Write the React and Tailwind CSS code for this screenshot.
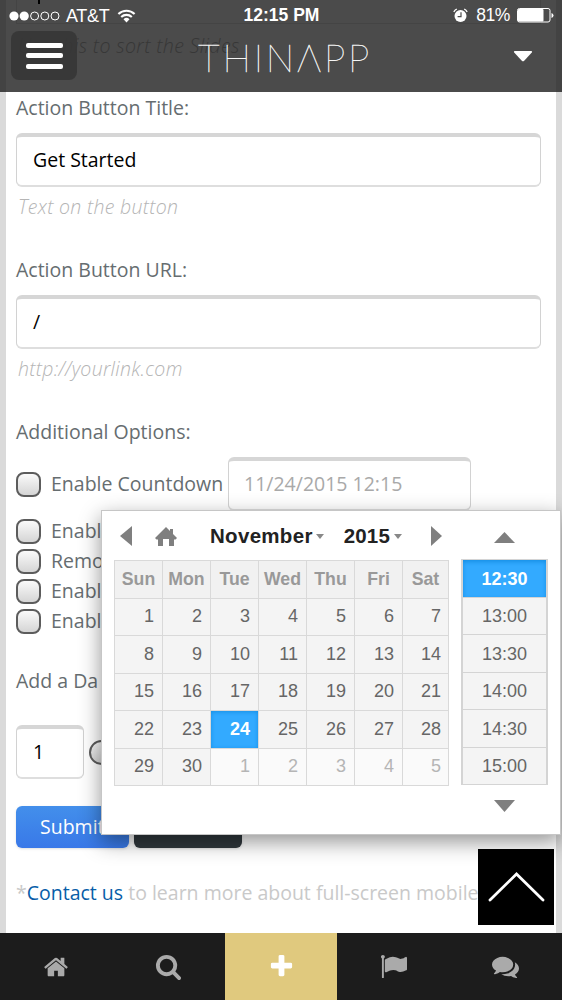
import React from "react";

const HOME =
  "M1472 992v480q0 26-19 45t-45 19h-384v-384h-256v384h-384q-26 0-45-19t-19-45v-480q0-1 .5-3t.5-3l575-474 575 474q1 2 1 6zm223-69l-62 74q-8 9-21 11h-3q-13 0-21-7l-692-577-692 577q-12 8-24 7-13-2-21-11l-62-74q-8-10-7-23.5t11-21.5l719-599q32-26 76-26t76 26l244 204v-195q0-14 9-23t23-9h192q14 0 23 9t9 23v408l219 182q10 8 11 21.5t-7 23.5z";
const SEARCH =
  "M1216 832q0-185-131.5-316.5t-316.5-131.5-316.5 131.5-131.5 316.5 131.5 316.5 316.5 131.5 316.5-131.5 131.5-316.5zm512 832q0 52-38 90t-90 38q-54 0-90-38l-343-342q-179 124-399 124-143 0-273.5-55.5t-225-150-150-225-55.5-273.5 55.5-273.5 150-225 225-150 273.5-55.5 273.5 55.5 225 150 150 225 55.5 273.5q0 220-124 399l343 343q37 37 37 90z";
const PLUS =
  "M1600 736v192q0 40-28 68t-68 28h-416v416q0 40-28 68t-68 28h-192q-40 0-68-28t-28-68v-416h-416q-40 0-68-28t-28-68v-192q0-40 28-68t68-28h416v-416q0-40 28-68t68-28h192q40 0 68 28t28 68v416h416q40 0 68 28t28 68z";
const FLAG =
  "M320 256q0 72-64 110v1266q0 13-9.5 22.5t-22.5 9.5h-64q-13 0-22.5-9.5t-9.5-22.5v-1266q-64-38-64-110 0-53 37.5-90.5t90.5-37.5 90.5 37.5 37.5 90.5zm1472 64v763q0 25-12.5 38.5t-39.5 27.5q-215 116-369 116-61 0-123.5-22t-108.5-48-115.5-48-142.5-22q-192 0-464 146-17 9-33 9-26 0-45-19t-19-45v-742q0-32 31-55 21-14 79-43 236-120 421-120 107 0 200 29t219 88q38 19 88 19 54 0 117.5-21t110-47 88-47 54.5-21q26 0 45 19t19 45z";
const COMMENTS =
  "M1408 768q0 139-94 257t-256.5 186.5-353.5 68.5q-86 0-176-16-124 88-278 128-36 9-86 16h-3q-11 0-20.5-8t-11.5-21q-1-3-1-6.5t.5-6.5 2-6l2.5-5 3.5-5.5 4-5 4.5-5 4-4.500q5-6 23-25t26-29.5 22.5-29 25-38.5 20.5-44q-124-72-195-177t-71-224q0-139 94-257t256.5-186.5 353.5-68.5 353.5 68.5 256.5 186.5 94 257zm384 256q0 120-71 224.5t-195 176.5q10 24 20.5 44t25 38.5 22.5 29 26 29.5 23 25q1 1 4 4.5t4.5 5 4 5 3.5 5.5l2.5 5 2 6 .5 6.5-1 6.500q-3 14-13 22t-22 7q-50-7-86-16-154-40-278-128-90 16-176 16-271 0-472-132 58 4 88 4 161 0 309-45t264-129q125-92 192-212t67-254q0-77-23-152 129 71 204 178t75 230z";

function Glyph({ d, className }) {
  return (
    <svg viewBox="0 0 1792 1792" fill="currentColor" className={className}>
      <path d={d} />
    </svg>
  );
}

function StatusBar() {
  return (
    <div className="grid h-[31px] grid-cols-[1fr_auto_1fr] items-center px-[9px] font-['Liberation_Sans',sans-serif] text-[18px] leading-none text-white">
      <div className="flex items-center">
        <svg width="52" height="10" viewBox="0 0 52 10">
          <circle cx="5" cy="5" r="4.6" fill="#fff" />
          <circle cx="15.2" cy="5" r="4.6" fill="#fff" />
          <g fill="none" stroke="#fff" strokeWidth="1">
            <circle cx="25.6" cy="5" r="4" />
            <circle cx="35.8" cy="5" r="4" />
            <circle cx="46" cy="5" r="4" />
          </g>
        </svg>
        <span className="ml-[5px] tracking-[-0.3px]">AT&amp;T</span>
        <svg width="19" height="14" viewBox="0 0 18 14" className="ml-[8px]" fill="none" stroke="#fff" strokeWidth="2.1">
          <path d="M.9 5.1a11.5 11.5 0 0 1 16.2 0M3.7 8a7.6 7.6 0 0 1 10.6 0" />
          <path d="M9 13.4 6 10.3a4.3 4.3 0 0 1 6 0z" fill="#fff" stroke="none" />
        </svg>
      </div>
      <span className="pl-px text-[17.5px] font-bold">12:15 PM</span>
      <div className="-mr-[1px] flex items-center justify-end">
        <svg width="15" height="15" viewBox="0 0 15 15">
          <circle cx="7.5" cy="8" r="6" fill="#fff" />
          <path d="M.8 3.8a8 8 0 0 1 3-2.8M14.2 3.8a8 8 0 0 0-3-2.8" fill="none" stroke="#fff" strokeWidth="1.4" />
          <path d="M8 4.2v4.4H4.6" fill="none" stroke="#4b4b4b" strokeWidth="1.2" />
        </svg>
        <span className="ml-[8px] text-[17.5px] tracking-[-0.4px]">81%</span>
        <svg width="37" height="15" viewBox="0 0 37 15" className="ml-[7px]">
          <rect x=".5" y=".5" width="32.5" height="13.5" rx="2" fill="none" stroke="#fff" />
          <rect x="1" y="1" width="25.500" height="12.500" rx="1" fill="#fff" />
          <path d="M34.5 5v5q2-.7 2-2.5t-2-2.5z" fill="#fff" />
        </svg>
      </div>
    </div>
  );
}

function Header() {
  return (
    <header className="relative h-[92px] shrink-0 overflow-hidden bg-[#4b4b4b]">
      <div className="absolute inset-y-0 left-0 w-[6px] bg-[#434343]" />
      <div className="absolute inset-y-0 right-0 w-[6px] bg-[#434343]" />
      <div className="absolute left-[16px] right-[21px] top-0 h-[24px] border-x border-b border-[#444]" />
      <div className="absolute left-[38px] top-0 h-[4px] w-[2px] bg-black" />
      <div className="absolute left-[18px] top-[31px] whitespace-nowrap text-[19.600px] font-light italic tracking-[0.35px] text-[#373737]">
        Use this to sort the Slides
      </div>
      <div className="relative">
        <StatusBar />
        <div className="flex h-[49px] items-center justify-between pl-[11px] pr-[29px]">
          <button className="flex h-[49px] w-[66px] flex-col items-center justify-center gap-[5.5px] rounded-[8px] bg-[#363636]/90">
            <span className="h-[5px] w-[37px] rounded-[2px] bg-white" />
            <span className="h-[5px] w-[37px] rounded-[2px] bg-white" />
            <span className="h-[5px] w-[37px] rounded-[2px] bg-white" />
          </button>
          <div className="h-[49px] w-[194px] whitespace-nowrap font-['Lato',sans-serif] text-[38px] font-thin leading-[53px] tracking-[2.800px] text-white antialiased opacity-95 [-webkit-text-stroke:0.4px_white]">
            THINΛPP
          </div>
          <svg width="20" height="12" viewBox="0 0 20 12" fill="#fff">
            <path d="M1.6 1h16.8q1.2.2.4 1.4l-7.6 8.4q-1.2 1-2.4 0L1.2 2.4Q.4 1.200 1.6 1z" />
          </svg>
        </div>
      </div>
    </header>
  );
}

function Field({ label, value, help }) {
  return (
    <div className="h-[162px]">
      <div className="h-[41px] leading-[31px]">{label}</div>
      <div className="h-[54px] rounded-[6px] border border-b-2 border-t-4 border-[#d2d2d2] border-b-[#dedede] border-t-[#d6d6d6] pl-[16px] leading-[46px] text-black">
        {value}
      </div>
      <div className="pl-[2px] pt-[4px] font-light italic leading-[32px] tracking-[0.29px] text-[#b5b5b5]">{help}</div>
    </div>
  );
}

function Check({ children, className = "h-[30px]" }) {
  return (
    <div className={`flex items-center ${className}`}>
      <span className="mr-[10px] size-[25px] shrink-0 rounded-[8px] border-2 border-[#5c5c5c] bg-linear-to-b from-[#fafafa] to-[#d5d5d5]" />
      <span className="whitespace-nowrap">{children}</span>
    </div>
  );
}

const DAYS = ["Sun", "Mon", "Tue", "Wed", "Thu", "Fri", "Sat"];
const CELLS = Array.from({ length: 35 }, (_, i) => (i < 30 ? i + 1 : i - 29));
const TIMES = ["12:30", "13:00", "13:30", "14:00", "14:30", "15:00"];

function DatePicker() {
  return (
    <div className="absolute left-[101px] top-[510px] flex h-[325px] w-[460px] border border-[#c6c6c6] bg-white pl-[12px] font-['Liberation_Sans',sans-serif] text-[18px] text-[#666] shadow-[0_7px_20px_rgba(0,0,0,0.42)]">
      <div className="w-[335px]">
        <div className="flex h-[50px] items-center pl-[6px] text-[20.5px] font-bold text-[#222]">
          <svg width="12" height="20" viewBox="0 0 12 20" fill="#7f7f7f"><path d="M12 0v20L0 10z" /></svg>
          <svg width="22" height="19" viewBox="0 0 22 19" fill="#7f7f7f" className="ml-[23px]">
            <path d="M11 0 0 11l1.500 1.500H3V19h5v-7h6v7h5v-6.500h1.500L22 11l-4-4V2h-3v2z" />
          </svg>
          <span className="ml-[33px] tracking-[0.3px]">November</span>
          <svg width="8" height="5" viewBox="0 0 8 5" fill="#888" className="ml-[3px]"><path d="M0 0h8L4 5z" /></svg>
          <span className="ml-[20px] tracking-[0.200px]">2015</span>
          <svg width="8" height="5" viewBox="0 0 8 5" fill="#888" className="ml-[4px]"><path d="M0 0h8L4 5z" /></svg>
          <svg width="11" height="20" viewBox="0 0 11 20" fill="#7f7f7f" className="ml-[29px]"><path d="M0 0v20l11-10z" /></svg>
        </div>
        <div className="-mt-px grid h-[226px] w-[335px] grid-cols-[repeat(6,48px)_46px] grid-rows-6 border-l border-t border-[#d9d9d9]">
          {DAYS.map((d) => (
            <div key={d} className="flex items-center justify-center border-b border-r border-[#d9d9d9] bg-[#f1f1f1] text-[17.700px] font-bold text-[#999]">
              {d}
            </div>
          ))}
          {CELLS.map((n, i) => (
            <div
              key={i}
              className={`flex items-center justify-end border-b border-r border-[#d9d9d9] ${i % 7 === 6 ? "pr-[7px]" : "pr-[8px]"} ${
                i === 23
                  ? "bg-[#33aaff] font-bold text-white shadow-[inset_0_1px_4px_#178fe5]"
                  : i > 29
                    ? "bg-[#fafafa] text-[#b5b5b5]"
                    : "bg-[#f4f4f4]"
              }`}
            >
              {n}
            </div>
          ))}
        </div>
      </div>
      <div className="ml-[12px] flex w-[87px] flex-col items-center">
        <div className="flex h-[48px] items-center pt-[4px]">
          <svg width="21" height="11" viewBox="0 0 21 11" fill="#7f7f7f"><path d="M0 11h21L10.500 0z" /></svg>
        </div>
        <div className="grid h-[226px] w-full grid-rows-6 border-x-2 border-t border-[#d4d4d4]">
          {TIMES.map((t, i) => (
            <div
              key={t}
              className={`flex items-center justify-center border-b border-[#d4d4d4] pt-[2px] ${
                i === 0 ? "bg-[#33aaff] font-bold text-white shadow-[inset_0_2px_4px_#178fe5]" : "bg-[#f4f4f4]"
              }`}
            >
              {t}
            </div>
          ))}
        </div>
        <svg width="21" height="12" viewBox="0 0 21 12" fill="#7f7f7f" className="mt-[15px]"><path d="M0 0h21L10.500 12z" /></svg>
      </div>
    </div>
  );
}

export default function App() {
  return (
    <div className="relative flex h-[1000px] w-[562px] flex-col overflow-hidden bg-white font-['Open_Sans',sans-serif] text-[19.5px] text-[#666d70]">
      <Header />
      <main className="h-[841px] border-x-[6px] border-[#dadada] pl-[10px] pr-[15px]">
        <Field label="Action Button Title:" value="Get Started" help="Text on the button" />
        <Field label="Action Button URL:" value="/" help="http://yourlink.com" />
        <div className="h-[41px] leading-[31px]">Additional Options:</div>
        <div className="flex h-[54px]">
          <Check className="h-[54px] w-[212px]">Enable Countdown</Check>
          <div className="h-[54px] w-[243px] rounded-[6px] border border-b-2 border-t-4 border-[#d2d2d2] border-b-[#dedede] border-t-[#d6d6d6] pl-[15px] leading-[46px] text-[#a9a9a9]">
            11/24/2015 12:15
          </div>
        </div>
        <div className="pt-[5px]">
          <Check>Enabl</Check>
          <Check>Remo</Check>
          <Check>Enabl</Check>
          <Check>Enabl</Check>
        </div>
        <div className="mt-[29px] h-[60px] leading-[31px]">Add a Da</div>
        <div className="flex h-[54px] items-center">
          <div className="h-[54px] w-[68px] rounded-[6px] border border-b-2 border-t-4 border-[#d2d2d2] border-b-[#dedede] border-t-[#d6d6d6] pl-[16px] leading-[46px] text-black">1</div>
          <span className="ml-[5px] size-[25px] rounded-full border-2 border-[#5c5c5c] bg-linear-to-b from-[#fafafa] to-[#d5d5d5]" />
        </div>
        <div className="mt-[27px] flex gap-[5px]">
          <button className="h-[42px] w-[113px] rounded-[6px] bg-linear-to-b from-[#438feb] to-[#3978e8] pl-[24px] text-left text-white shadow-sm">Submit</button>
          <div className="h-[42px] w-[108px] rounded-[6px] bg-[#30383d] shadow-sm" />
        </div>
        <p className="mt-[29px] whitespace-nowrap leading-[32px] text-[#c9c9c9]">
          *<a className="text-[#075da8]">Contact us</a> to learn more about full-screen mobile
        </p>
      </main>
      <nav className="grid h-[67px] shrink-0 grid-cols-[225px_112px_225px] bg-[#1c1c1c] text-[#aaa]">
        <div className="grid grid-cols-2 place-items-center">
          <Glyph d={HOME} className="size-[26px]" />
          <Glyph d={SEARCH} className="size-[27px]" />
        </div>
        <div className="flex items-center justify-center bg-[#e0c97e] text-white">
          <Glyph d={PLUS} className="size-[27px]" />
        </div>
        <div className="grid grid-cols-2 place-items-center">
          <Glyph d={FLAG} className="size-[27px]" />
          <Glyph d={COMMENTS} className="size-[27px]" />
        </div>
      </nav>
      <DatePicker />
      <button className="absolute left-[478px] top-[849px] flex size-[76px] items-center justify-center bg-black">
        <svg width="58" height="34" viewBox="0 0 58 34" fill="none" stroke="#fff" strokeWidth="2.800" strokeLinecap="round">
          <path d="M3 30 29.500 4 56 30" />
        </svg>
      </button>
    </div>
  );
}
